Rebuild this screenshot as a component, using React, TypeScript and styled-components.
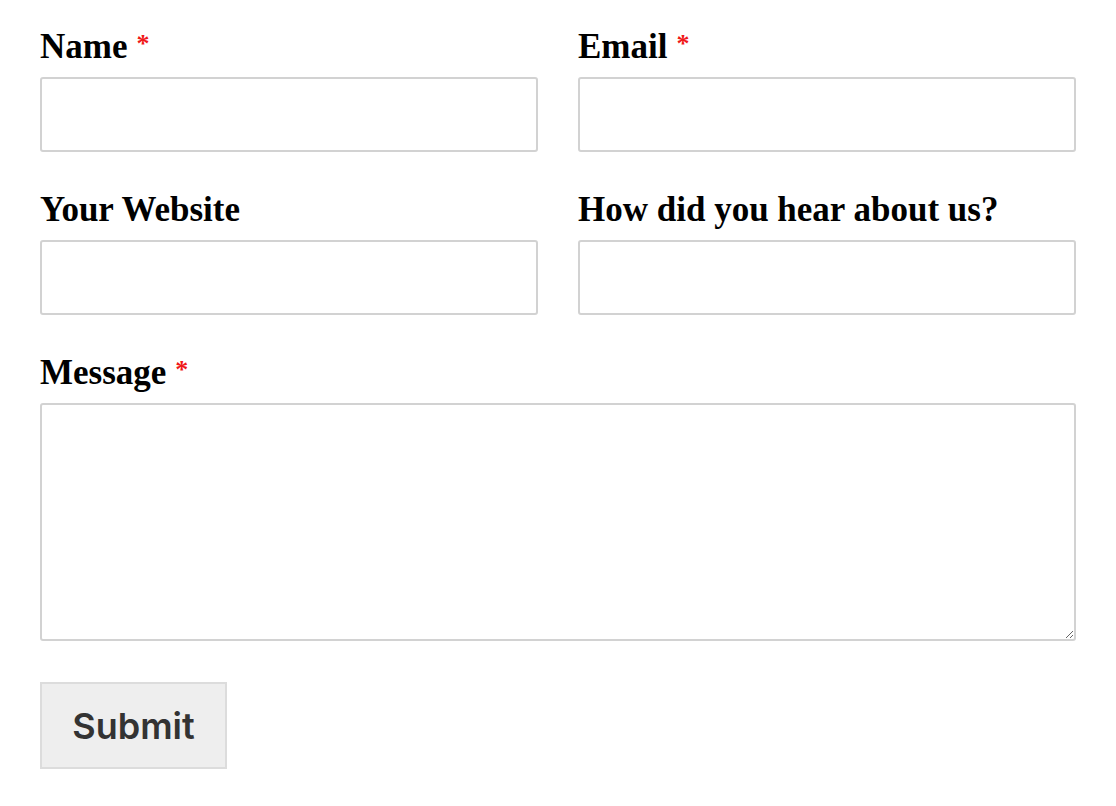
import styled, { createGlobalStyle } from "styled-components";

const GlobalStyle = createGlobalStyle`
  html, body {
    margin: 0;
    padding: 0;
    background: #ffffff;
  }
`;

const Form = styled.form`
  padding: 19px 40px 40px 40px;
  display: flex;
  flex-direction: column;
  gap: 30px;
`;

const Row = styled.div`
  display: grid;
  grid-template-columns: 1fr 1fr;
  column-gap: 40px;
`;

const Field = styled.div`
  display: flex;
  flex-direction: column;
`;

const Label = styled.label`
  font-family: "Liberation Serif", "DejaVu Serif", serif;
  font-weight: bold;
  font-size: 35px;
  line-height: 56px;
  color: #000;
  margin-bottom: 2px;
`;

const Required = styled.span`
  color: #f01818;
  font-weight: bold;
  font-size: 26px;
  margin-left: 9px;
  vertical-align: top;
  position: relative;
  top: -3px;
`;

const Input = styled.input`
  box-sizing: border-box;
  height: 75px;
  width: 100%;
  border: 2px solid #d2d2d2;
  border-radius: 3px;
  background: #fff;
  font-size: 20px;
  padding: 0 12px;
  outline: none;
`;

const TextArea = styled.textarea`
  box-sizing: border-box;
  height: 238px;
  width: 100%;
  border: 2px solid #d2d2d2;
  border-radius: 3px;
  background: #fff;
  font-size: 20px;
  padding: 12px;
  outline: none;
  resize: vertical;
`;

const SubmitButton = styled.button`
  align-self: flex-start;
  margin-top: 11px;
  box-sizing: border-box;
  width: 187px;
  height: 87px;
  background: #eeeeee;
  border: 2px solid #dcdcdc;
  border-radius: 0;
  font-family: Inter, "Liberation Sans", sans-serif;
  font-size: 36px;
  font-weight: 600;
  color: #333333;
  cursor: pointer;
`;

type FieldProps = { label: string; required?: boolean };

const TextField = ({ label, required }: FieldProps) => (
  <Field>
    <Label>
      {label}
      {required && <Required>*</Required>}
    </Label>
    <Input type="text" />
  </Field>
);

export default function App() {
  return (
    <>
      <GlobalStyle />
      <Form onSubmit={(e) => e.preventDefault()}>
        <Row>
          <TextField label="Name" required />
          <TextField label="Email" required />
        </Row>
        <Row>
          <TextField label="Your Website" />
          <TextField label="How did you hear about us?" />
        </Row>
        <Field>
          <Label>
            Message<Required>*</Required>
          </Label>
          <TextArea />
        </Field>
        <SubmitButton type="submit">Submit</SubmitButton>
      </Form>
    </>
  );
}
